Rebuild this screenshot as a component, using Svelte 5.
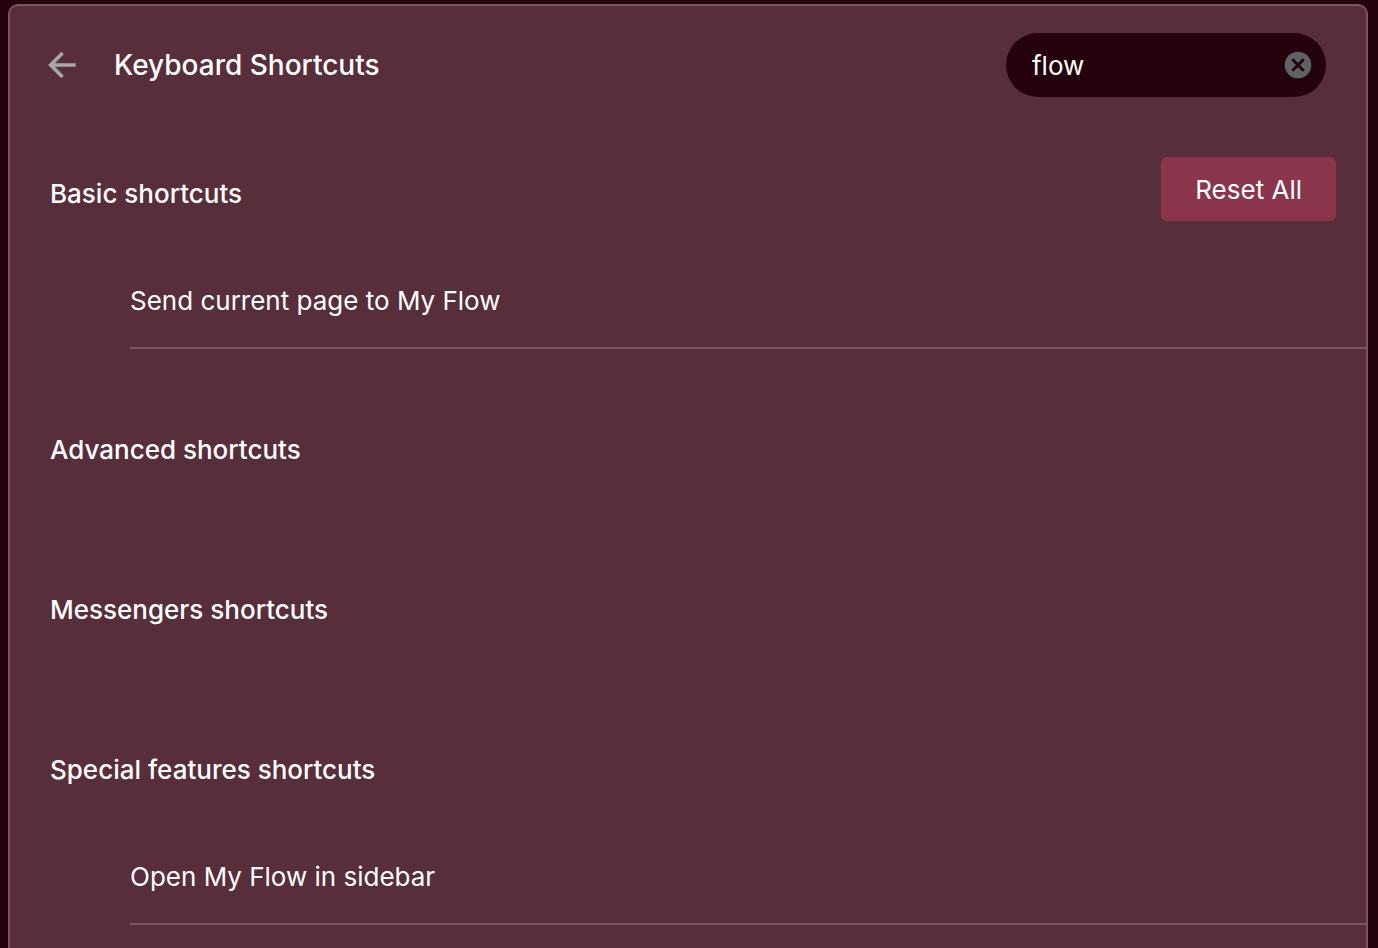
<script lang="ts">
    type Section = { title: string; shortcuts: string[] };

    const sections: Section[] = [
        { title: "Basic shortcuts", shortcuts: ["Send current page to My Flow"] },
        { title: "Advanced shortcuts", shortcuts: [] },
        { title: "Messengers shortcuts", shortcuts: [] },
        { title: "Special features shortcuts", shortcuts: ["Open My Flow in sidebar"] },
    ];

    let query = $state("flow");

    // Sections stay listed even when none of their shortcuts match
    const filtered = $derived(
        sections.map((section) => ({
            ...section,
            shortcuts: section.shortcuts.filter((name) =>
                name.toLowerCase().includes(query.trim().toLowerCase())
            ),
        }))
    );
</script>

<main class="panel">
    <header class="toolbar">
        <button class="icon-button back" aria-label="Back">
            <svg viewBox="0 0 28 28" width="28" height="28" aria-hidden="true">
                <path d="M27.7 14H3M14.6 2 2.6 14l12 12" fill="none" stroke="#a8a9aa" stroke-width="3.500" />
            </svg>
        </button>
        <h1>Keyboard Shortcuts</h1>
        <div class="search">
            <input type="text" aria-label="Search shortcuts" bind:value={query} />
            <button class="icon-button" aria-label="Clear search" onclick={() => (query = "")}>
                <svg viewBox="0 0 28 28" width="28" height="28" aria-hidden="true">
                    <circle cx="14" cy="14" r="13.300" fill="#5f6368" />
                    <path d="m8.300 8.300 11.400 11.400m0-11.400L8.300 19.700" stroke="#25030d" stroke-width="3" />
                </svg>
            </button>
        </div>
    </header>

    <div class="sections">
        {#each filtered as section, i}
            <section>
                <div class="section-head">
                    <h2>{section.title}</h2>
                    {#if i === 0}
                        <button class="reset">Reset All</button>
                    {/if}
                </div>
                <ul>
                    {#each section.shortcuts as shortcut}
                        <li>{shortcut}</li>
                    {/each}
                </ul>
            </section>
        {/each}
    </div>
</main>

<style>
    :global(body) {
        margin: 0;
        padding: 4px 10px 0 8px;
        height: 100vh;
        box-sizing: border-box;
        overflow: hidden;
        background: #25030d;
    }
    .panel {
        min-height: 100vh;
        box-sizing: border-box;
        border: 2px solid #7a5661;
        border-radius: 10px;
        background: #582e3a;
        color: #fff;
        font-family: Inter, "Liberation Sans", sans-serif;
        font-size: 26px;
        line-height: 32px;
    }
    button,
    input {
        border: 0;
        color: inherit;
        font: inherit;
    }
    .toolbar {
        display: flex;
        align-items: center;
        padding: 27px 40px 0 38px;
    }
    .icon-button {
        display: flex;
        padding: 0;
        background: none;
        cursor: pointer;
    }
    .back {
        margin-right: 38px;
    }
    h1,
    h2 {
        margin: 0;
        font-weight: 500;
    }
    h1 {
        flex: 1;
        font-size: 28px;
    }
    .search {
        display: flex;
        align-items: center;
        width: 320px;
        height: 64px;
        padding: 0 14px 0 26px;
        box-sizing: border-box;
        border-radius: 32px;
        background: #25030d;
    }
    .search input {
        flex: 1;
        min-width: 0;
        padding: 2px 0 0;
        outline: none;
        background: none;
    }
    .sections {
        display: flex;
        flex-direction: column;
        gap: 64px;
        padding: 60px 0;
    }
    .section-head {
        display: flex;
        justify-content: space-between;
        align-items: flex-start;
        padding: 0 30px 22px 40px;
    }
    h2 {
        font-size: 26px;
        line-height: 74px;
    }
    .reset {
        height: 64px;
        padding: 2px 34px 0;
        border-radius: 6px;
        background: #8b354d;
        cursor: pointer;
    }
    ul {
        margin: 0;
        padding: 0 0 0 120px;
        list-style: none;
    }
    li {
        padding: 32px 0 30px;
        border-bottom: 2px solid #7a5661;
    }
</style>
